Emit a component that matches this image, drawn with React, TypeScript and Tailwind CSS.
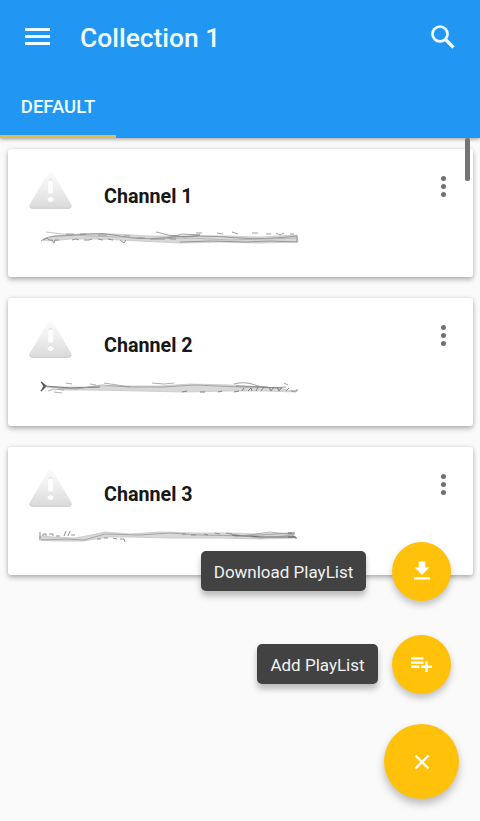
import type { ReactNode } from "react";

type Stroke = { d: string; c: string; w: number };
type Channel = { name: string; band: string; strokes: Stroke[] };

/* Scribbled-out addresses, each drawn in a 264x20 box. */
const channels: Channel[] = [
  {
    name: "Channel 1",
    band: "M3 10 L14 6 L40 4 L75 4 L110 6 L150 6 L185 6 L220 7 L257 5 L258 12 L220 13 L180 12 L140 13 L100 11 L60 9 L30 9 L12 11 Z",
    strokes: [
      { d: "M1 11 Q7 6 18 6 T46 4 T80 6 T120 8 T160 6 T200 8 T257 6", c: "#888", w: 0.8 },
      { d: "M6 2 L22 4 L48 6 L80 7 L116 9 L150 8 L190 10 L257 8", c: "#aaa", w: 0.7 },
      { d: "M3 10 l4 -2 2 2 3 0 2 3 1 -3 4 0 M32 10 l4 -1 3 1 M44 10 h5 l3 -1 M58 9 l5 1 M68 9 l5 1 M80 10 l4 3 2 -3", c: "#888", w: 0.9 },
      { d: "M116 2 L128 5 L145 7 L160 5 L142 4 L128 8 M156 3 h6 M177 3 l6 1 M192 2 l6 2 M212 3 h6 M226 4 h5 M236 3 l4 2 4 -2 M250 4 h4", c: "#888", w: 0.8 },
      { d: "M26 4 h8 M40 4 h6 M58 5 h9 M84 6 h6 M97 8 h8 M110 9 L125 9 M130 9 l6 0 M140 12 L170 11 L205 12 L230 11 L257 12 V6", c: "#888", w: 0.8 },
    ],
  },
  {
    name: "Channel 2",
    band: "M15 8 L45 8 L80 7 L120 7 L150 5 L190 6 L238 9 L256 13 L225 12 L190 12 L145 13 L100 12 L50 11 L22 11 Z",
    strokes: [
      { d: "M1 3 L6 7 L1 12 M2 4 L4 7 L2 11", c: "#555", w: 1.3 },
      { d: "M5 7 L30 9 L60 8", c: "#777", w: 1 },
      { d: "M7 8 L36 10 L62 6 L90 8 L124 8 L155 6 L200 8 L242 9", c: "#999", w: 0.8 },
      { d: "M8 12 L13 10 L24 11 M14 13 L22 14 M26 4 L32 5 M50 5 L56 6 M64 4 L90 8 M112 4 L124 5 L134 4", c: "#999", w: 0.8 },
      { d: "M194 5 Q205 2 215 6 T246 8 M196 7 L228 8 M244 4 l4 2", c: "#888", w: 0.8 },
      { d: "M142 13 l5 -1 M160 13 l5 0 M178 13 l4 -1 M194 13 l5 -1 M202 12 l2 -3 M208 12 l3 -3 1 3 M216 12 l2 -4 M221 12 l3 -4 M229 8 l2 4 3 -4 M237 8 l2 4 3 -4 M246 12 l3 -3 M251 12 h6 v-2", c: "#777", w: 0.9 },
    ],
  },
  {
    name: "Channel 3",
    band: "M0 8 L14 9 L35 10 L46 8 L65 4 L90 6 L120 4 L155 5 L190 5 L215 6 L252 5 L255 10 L220 11 L180 10 L130 10 L90 9 L68 9 L43 13 L14 13 L-1 12 Z",
    strokes: [
      { d: "M0 4 V11 M3 8 V6 H6 V8 M9 6 H13 V8 M16 8 H20 M26 3 L24 8 M30 3 L28 8 M31 7 H35", c: "#777", w: 0.8 },
      { d: "M1 12 L28 11 L44 12 L65 6 L100 7 L130 5 L160 7 L205 8 L252 5", c: "#999", w: 0.8 },
      { d: "M57 11 h4 M64 10 h4 M73 10 l4 1 M80 11 h4 l1 3 M142 6 h4 M151 7 h5 M164 6 l4 1 M175 5 l5 1 M186 5 l6 1", c: "#888", w: 0.9 },
      { d: "M192 7 L222 9 L255 9 M248 5 H255 M248 9 H256 V11", c: "#666", w: 1 },
      { d: "M195 9 L230 4 L255 7 M190 6 L220 10 L254 7", c: "#999", w: 0.7 },
    ],
  },
];

function WarningIcon() {
  return (
    <svg className="h-10 w-[45px]" viewBox="0 0 45 40" aria-hidden="true">
      <defs>
        <linearGradient id="warn" x1="0" y1="0" x2="0" y2="1">
          <stop offset="0" stopColor="#fcfcfc" />
          <stop offset="0.45" stopColor="#efefef" />
          <stop offset="1" stopColor="#d9d9d9" />
        </linearGradient>
      </defs>
      <path d="M20 3 Q22.500 -0.500 25 3 L43.300 34.500 Q44.500 38.500 41 38.700 H4 Q0.500 38.500 1.700 34.500 Z" fill="url(#warn)" />
      <path d="M2 36 Q2 38.200 4.500 38.300 H40.500 Q43 38.200 43 36" fill="none" stroke="#cacaca" strokeWidth="0.8" />
      <rect x="20.300" y="10" width="4.600" height="13.500" rx="1.600" fill="#fff" />
      <circle cx="22.600" cy="29" r="2.900" fill="#fff" />
      <path d="M20.500 10.500 Q22.600 8.800 24.700 10.500 M20 28 Q22.600 24.700 25.200 28" fill="none" stroke="#cfcfcf" strokeWidth="0.8" />
    </svg>
  );
}

function ChannelCard({ name, band, strokes }: Channel) {
  return (
    <article className="h-32 rounded-[3px] bg-white pt-[21px] shadow-[0_3px_5px_rgba(0,0,0,0.24),0_0_4px_rgba(0,0,0,0.13)]">
      <div className="flex h-[52px] items-start pl-5">
        <WarningIcon />
        <h2 className="ml-[31px] mt-[11px] flex-1 text-[19.700px] leading-8 font-bold text-[#171717]">{name}</h2>
        <button className="mr-[27px] mt-1.5 flex flex-col gap-[3px]" aria-label="Channel options">
          <i className="size-[5px] rounded-full bg-[#707070]" />
          <i className="size-[5px] rounded-full bg-[#707070]" />
          <i className="size-[5px] rounded-full bg-[#707070]" />
        </button>
      </div>
      <svg className="ml-8 mt-2 h-5 w-[264px] overflow-visible" viewBox="0 0 264 20" aria-hidden="true">
        <path d={band} fill="#d8d8d8" />
        <path d={band} fill="none" stroke="#c6c6c6" strokeWidth="0.8" />
        {strokes.map((s) => (
          <path key={s.d} d={s.d} fill="none" stroke={s.c} strokeWidth={s.w} />
        ))}
      </svg>
    </article>
  );
}

function ActionLabel({ children }: { children: ReactNode }) {
  return (
    <span className="flex h-10 items-center justify-center rounded-[5px] bg-[#424242] pt-[3px] text-[17px] text-[#f1f1f1] shadow-[0_5px_6px_rgba(0,0,0,0.26)]">
      {children}
    </span>
  );
}

function RoundButton({ label, children }: { label: string; children: ReactNode }) {
  return (
    <button
      aria-label={label}
      className="flex size-[59px] shrink-0 items-center justify-center rounded-full bg-[#ffc10a] text-white shadow-[0_4px_7px_rgba(0,0,0,0.24)]"
    >
      {children}
    </button>
  );
}

export default function App() {
  return (
    <div className="relative h-[821px] w-[480px] overflow-hidden bg-[#fafafa] font-[Roboto,sans-serif]">
      <header className="h-[138px] bg-[#2196f3] text-[#efffff] shadow-[0_1px_4px_rgba(0,0,0,0.4)]">
        <div className="flex h-[76px] items-center pl-[25px] pr-[25px]">
          <button className="mb-[3px] flex w-[25px] flex-col gap-1" aria-label="Menu">
            <i className="h-[3px] bg-current" />
            <i className="h-[3px] bg-current" />
            <i className="h-[3px] bg-current" />
          </button>
          <h1 className="ml-[30px] flex-1 pt-0.5 text-[26.400px] font-medium">Collection 1</h1>
          <svg className="mb-[3px] size-6" viewBox="0 0 24 24" fill="none" stroke="currentColor" strokeWidth="2.700" aria-hidden="true">
            <circle cx="9" cy="9" r="7.500" />
            <path d="m14.500 14.500 8 8" strokeWidth="3.200" />
          </svg>
        </div>
        <nav className="flex h-[62px]">
          <span className="flex w-[116px] items-center justify-center border-b-[3px] border-[#dfbd55] pt-[5px] text-[18.500px] font-medium">DEFAULT</span>
        </nav>
      </header>

      <main className="flex flex-col gap-[21px] pt-[11px] pr-[7px] pl-2">
        {channels.map((channel) => (
          <ChannelCard key={channel.name} {...channel} />
        ))}
      </main>

      <div className="absolute top-[138px] right-[10px] h-[43px] w-[5px] rounded-[2px] bg-[#747474]" />

      <aside className="absolute top-[541px] right-[21px] flex flex-col items-end">
        <div className="mr-2 flex h-[60px] items-center gap-[26px]">
          <div className="grid w-[165px]">
            <ActionLabel>Download PlayList</ActionLabel>
          </div>
          <RoundButton label="Download PlayList">
            <svg className="size-[24px]" viewBox="0 0 24 24" fill="currentColor" aria-hidden="true">
              <path d="M8.700 2.500h6.600v6h4L12 16 4.700 8.500h4zM4 18.200h16v2.400H4z" />
            </svg>
          </RoundButton>
        </div>
        <div className="mt-[33px] mr-2 flex h-[60px] items-center gap-[14px]">
          <div className="grid w-[121px]">
            <ActionLabel>Add PlayList</ActionLabel>
          </div>
          <RoundButton label="Add PlayList">
            <svg className="size-[25px]" viewBox="0 0 24 24" fill="currentColor" aria-hidden="true">
              <path d="M14 9H2v2.300h12zM14 5H2v2.300h12zM18 13V9h-2.300v4h-4v2.300h4v4H18v-4h4V13zM2 15.300h8V13H2z" />
            </svg>
          </RoundButton>
        </div>
        <button
          aria-label="Close menu"
          className="mt-[30px] flex size-[75px] items-center justify-center rounded-full bg-[#ffc10a] text-white shadow-[0_5px_9px_rgba(0,0,0,0.26)]"
        >
          <svg className="size-4" viewBox="0 0 16 16" fill="none" stroke="currentColor" strokeWidth="2.400" aria-hidden="true">
            <path d="m1.500 1.500 13 13m0-13-13 13" />
          </svg>
        </button>
      </aside>
    </div>
  );
}
